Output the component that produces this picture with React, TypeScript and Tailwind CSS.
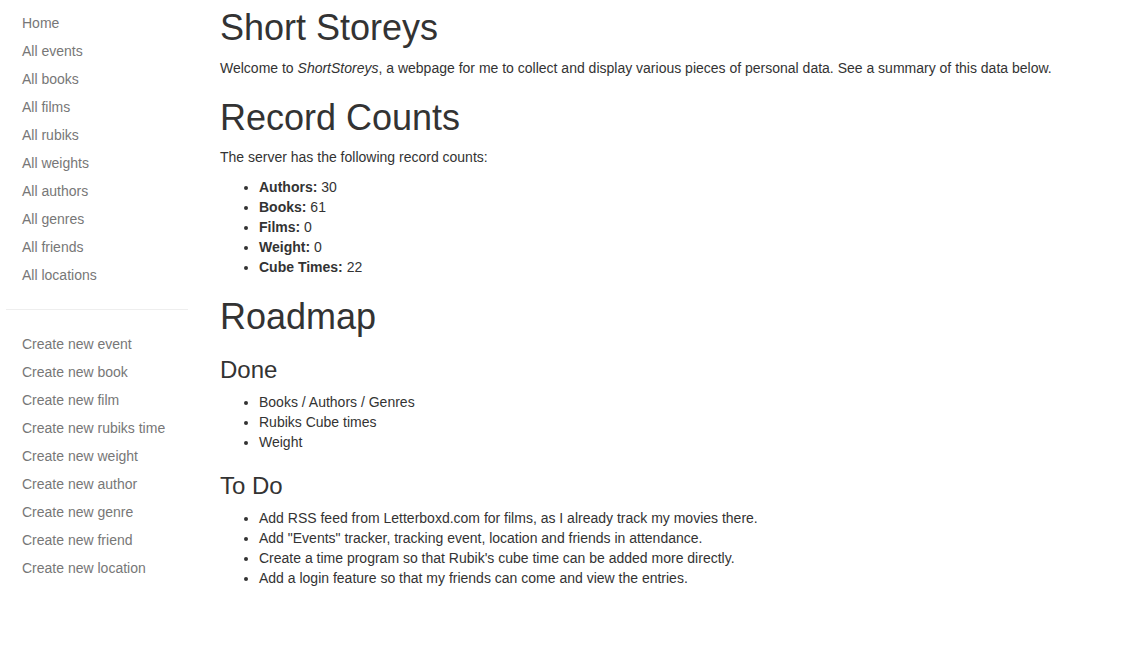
import React from "react";

const allLinks = [
  "Home",
  "All events",
  "All books",
  "All films",
  "All rubiks",
  "All weights",
  "All authors",
  "All genres",
  "All friends",
  "All locations",
];

const createLinks = [
  "Create new event",
  "Create new book",
  "Create new film",
  "Create new rubiks time",
  "Create new weight",
  "Create new author",
  "Create new genre",
  "Create new friend",
  "Create new location",
];

export default function App() {
  return (
    <div
      className="flex min-h-[671px] bg-white text-[14px] leading-[20px] text-[#333]"
      style={{ fontFamily: '"Liberation Sans", Arial, Helvetica, sans-serif' }}
    >
      <aside className="w-[190px] shrink-0 pt-[9px]">
        <ul className="pl-[22px]">
          {allLinks.map((l) => (
            <li key={l}>
              <a className="block py-[4px] text-[#777]" href="#">
                {l}
              </a>
            </li>
          ))}
        </ul>
        <hr className="ml-[6px] mr-[2px] my-[20px] border-0 border-t border-[#eee]" />
        <ul className="pl-[22px]">
          {createLinks.map((l) => (
            <li key={l}>
              <a className="block py-[4px] text-[#777]" href="#">
                {l}
              </a>
            </li>
          ))}
        </ul>
      </aside>
      <main className="flex-1 pl-[30px] pt-[8px]">
        <h1 className="text-[36px] leading-[1.1] font-normal mb-[10px]">Short Storeys</h1>
        <p className="mb-[10px]">
          Welcome to <em>ShortStoreys</em>, a webpage for me to collect and display various pieces of personal data. See a summary of this data below.
        </p>
        <h1 className="text-[36px] leading-[1.1] font-normal mt-[20px] mb-[10px]">Record Counts</h1>
        <p className="mb-[10px]">The server has the following record counts:</p>
        <ul className="list-disc pl-[39px] mb-[10px]">
          <li>
            <b>Authors:</b> 30
          </li>
          <li>
            <b>Books:</b> 61
          </li>
          <li>
            <b>Films:</b> 0
          </li>
          <li>
            <b>Weight:</b> 0
          </li>
          <li>
            <b>Cube Times:</b> 22
          </li>
        </ul>
        <h1 className="text-[36px] leading-[1.1] font-normal mt-[20px] mb-[10px]">Roadmap</h1>
        <h3 className="text-[24px] leading-[1.1] font-normal mt-[20px] mb-[9px]">Done</h3>
        <ul className="list-disc pl-[39px] mb-[10px]">
          <li>Books / Authors / Genres</li>
          <li>Rubiks Cube times</li>
          <li>Weight</li>
        </ul>
        <h3 className="text-[24px] leading-[1.1] font-normal mt-[21px] mb-[8px]">To Do</h3>
        <ul className="list-disc pl-[39px] mb-[10px]">
          <li>Add RSS feed from Letterboxd.com for films, as I already track my movies there.</li>
          <li>Add "Events" tracker, tracking event, location and friends in attendance.</li>
          <li>Create a time program so that Rubik's cube time can be added more directly.</li>
          <li>Add a login feature so that my friends can come and view the entries.</li>
        </ul>
      </main>
    </div>
  );
}
